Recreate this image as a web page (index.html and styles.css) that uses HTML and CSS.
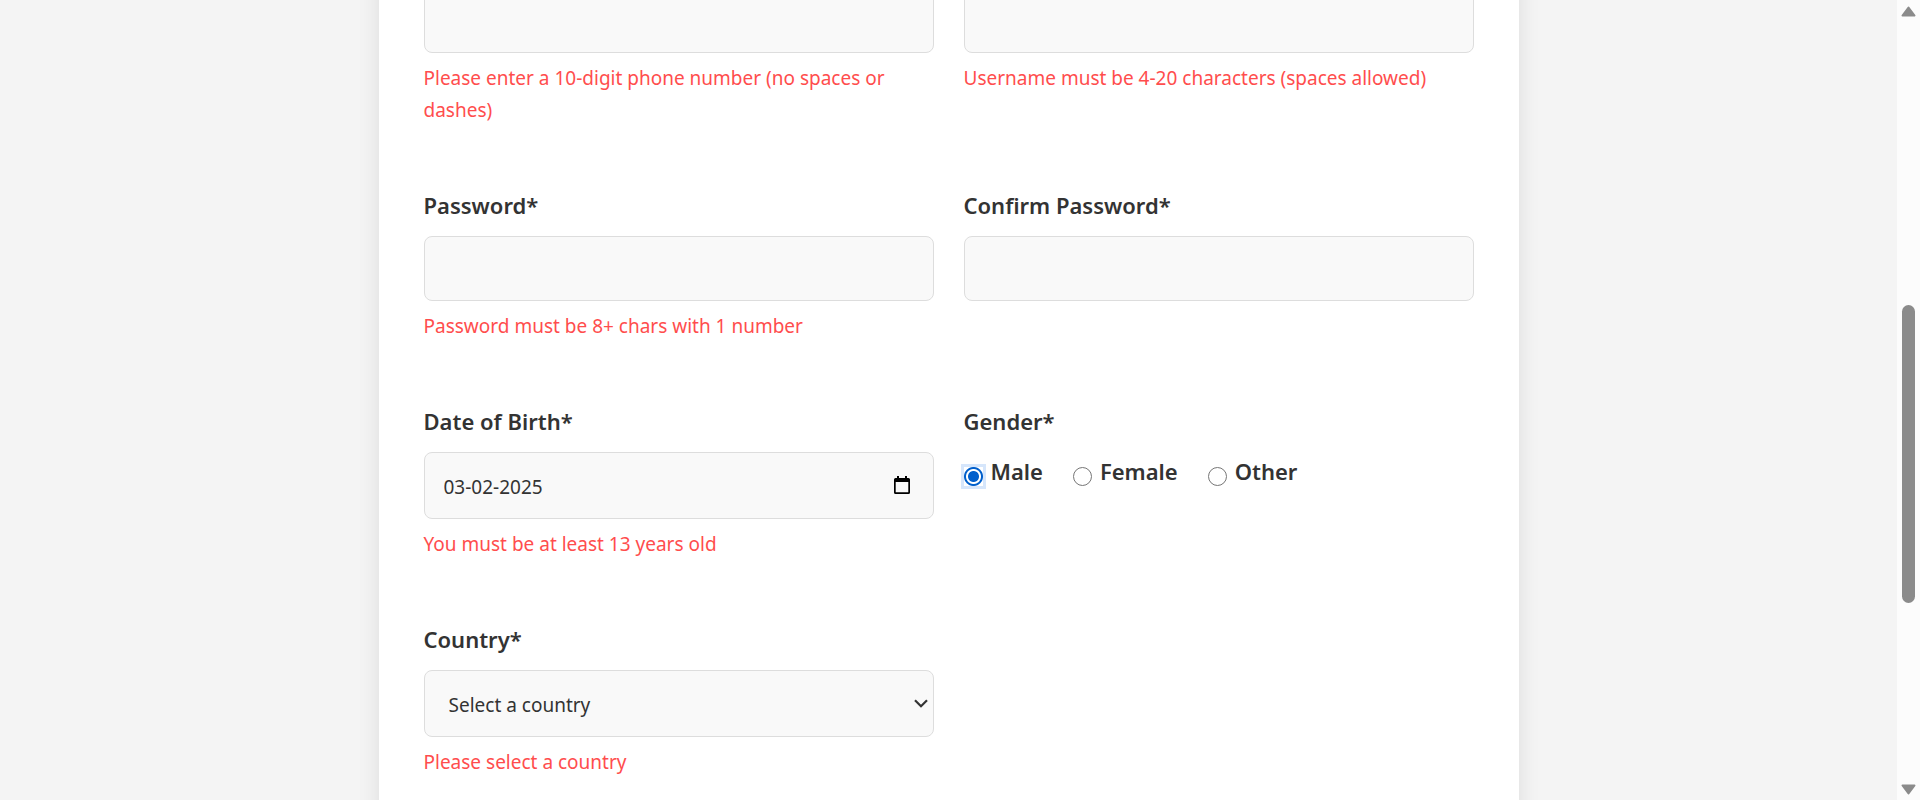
FILE: index.html
```html
<!DOCTYPE html>
<html lang="en">
<head>
<meta charset="utf-8">
<meta name="viewport" content="width=device-width, initial-scale=1">
<title>Registration</title>
<link rel="stylesheet" href="styles.css">
</head>
<body>
<div class="page">
  <main class="content">
    <form class="card" novalidate>
      <div class="field">
        <input class="control" type="tel" id="phone" aria-label="Phone" aria-describedby="phone-error">
        <p class="error" id="phone-error">Please enter a 10-digit phone number (no spaces or dashes)</p>
      </div>
      <div class="field">
        <input class="control" type="text" id="username" aria-label="Username" aria-describedby="username-error">
        <p class="error" id="username-error">Username must be 4-20 characters (spaces allowed)</p>
      </div>
      <div class="field">
        <label class="label" for="password">Password*</label>
        <input class="control" type="password" id="password">
        <p class="error">Password must be 8+ chars with 1 number</p>
      </div>
      <div class="field">
        <label class="label" for="confirm">Confirm Password*</label>
        <input class="control" type="password" id="confirm">
      </div>
      <div class="field">
        <label class="label" for="dob">Date of Birth*</label>
        <div class="control-wrap">
          <input class="control control-tall" type="text" id="dob" value="03-02-2025">
          <button class="calendar" type="button" aria-label="Open calendar">
            <svg width="16" height="18" viewBox="0 0 16 18"><path d="M3 0h2v2h6V0h2v2h1.500a1.500 1.500 0 0 1 1.500 1.500v13a1.500 1.500 0 0 1-1.500 1.500h-13A1.500 1.500 0 0 1 0 16.500v-13A1.500 1.500 0 0 1 1.500 2H3zM1.700 6v10.300h12.600V6z" fill="#000" fill-rule="evenodd"/></svg>
          </button>
        </div>
        <p class="error">You must be at least 13 years old</p>
      </div>
      <fieldset class="field group">
        <legend class="label">Gender*</legend>
        <div class="radios">
          <label class="radio"><input type="radio" name="gender" checked>Male</label>
          <label class="radio"><input type="radio" name="gender">Female</label>
          <label class="radio"><input type="radio" name="gender">Other</label>
        </div>
      </fieldset>
      <div class="field">
        <label class="label" for="country">Country*</label>
        <div class="control-wrap">
          <select class="control control-tall select" id="country"><option>Select a country</option></select>
          <svg class="chevron" width="14" height="9" viewBox="0 0 14 9"><path d="M1 1.200l6 6 6-6" fill="none" stroke="#333" stroke-width="2.200"/></svg>
        </div>
        <p class="error">Please select a country</p>
      </div>
    </form>
  </main>
  <div class="scrollbar" aria-hidden="true">
    <svg width="15" height="11" viewBox="0 0 15 11"><path d="M7.500 1.500L13.500 9.500H1.500z" fill="#8b8b8b" stroke="#8b8b8b" stroke-width="2" stroke-linejoin="round"/></svg>
    <div class="track"><div class="thumb"></div></div>
    <svg width="15" height="11" viewBox="0 0 15 11"><path d="M7.500 9.500L13.500 1.500H1.500z" fill="#8b8b8b" stroke="#8b8b8b" stroke-width="2" stroke-linejoin="round"/></svg>
  </div>
</div>
</body>
</html>
```
FILE: styles.css
```css
* { box-sizing: border-box; }

body {
  margin: 0;
  background: #f4f4f4;
  color: #333;
  font-family: "Segoe UI", "Noto Sans", sans-serif;
  font-size: 19px;
  line-height: 32px;
}

.page {
  display: flex;
  height: 100vh;
  overflow: hidden;
}

.content { flex: 1; }

.card {
  display: grid;
  grid-template-columns: 1fr 1fr;
  align-items: start;
  gap: 62px 30px;
  width: 100%;
  max-width: 1140px;
  margin: -57px auto 0;
  padding: 45px;
  background: #fff;
  box-shadow: 0 0 20px rgba(0, 0, 0, 0.1);
}

.field { min-width: 0; }

.group {
  margin: 0;
  padding: 0;
  border: 0;
}

.label {
  display: block;
  margin-bottom: 13px;
  padding: 0;
  font-size: 22px;
  font-weight: 600;
  line-height: 35px;
}

.control {
  display: block;
  width: 100%;
  height: 65px;
  padding: 0 19px;
  border: 1px solid #ddd;
  border-radius: 8px;
  background: #f9f9f9;
  color: #333;
  font: inherit;
}

.control-tall { height: 67px; padding-top: 3px; }

.control-wrap { position: relative; }

.select {
  padding-left: 24px;
  appearance: none;
}

.calendar {
  position: absolute;
  top: 24px;
  right: 24px;
  padding: 0;
  border: 0;
  background: none;
  line-height: 0;
}

.chevron {
  position: absolute;
  top: 29px;
  right: 6px;
  pointer-events: none;
}

.error {
  margin: 9px 0 0;
  color: #ff4d4d;
}

.radios {
  display: flex;
  gap: 30px;
}

.radio {
  display: flex;
  gap: 8px;
  font-size: 22px;
  font-weight: 600;
  line-height: 38px;
}

.radio input {
  appearance: none;
  width: 19px;
  height: 19px;
  margin: 15px 0 0;
  border: 1px solid #767676;
  border-radius: 50%;
  background: #fff;
}

.radio input:checked {
  border: 0;
  border-radius: 0;
  background: radial-gradient(circle, #005fcc 5px, #fff 6px, #fff 7px, #005fcc 8px, #005fcc 9px, #fff 10px);
  box-shadow: 0 0 0 3px #d6e6fb;
}

.scrollbar {
  display: flex;
  flex-direction: column;
  align-items: center;
  width: 23px;
  padding: 6px 0 5px;
  background: #fcfcfc;
}

.track {
  display: grid;
  flex: 1;
  grid-template-rows: 288fr 297fr 181fr;
}

.thumb {
  grid-row: 2;
  width: 13px;
  border-radius: 7px;
  background: #8b8b8b;
}
```
